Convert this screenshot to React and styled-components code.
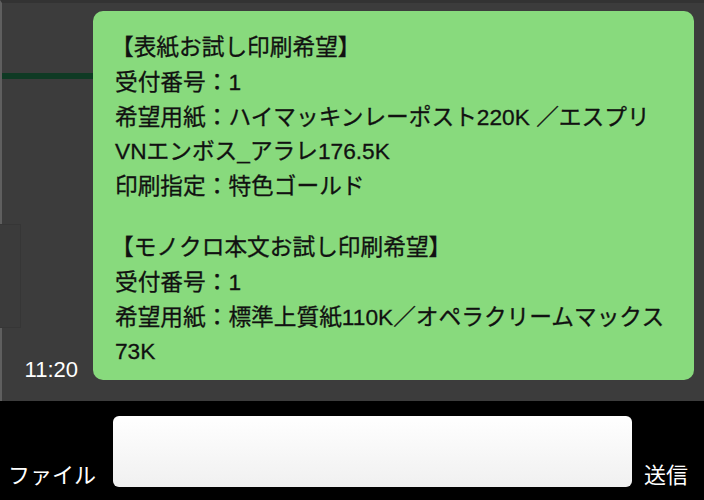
import React from 'react';
import styled, {createGlobalStyle} from "styled-components";

const GlobalStyle = createGlobalStyle`
  html, body {
    margin: 0;
    padding: 0;
    background: #3c3c3c;
  }
  body {
    font-family: "Liberation Sans", "Noto Sans CJK JP", sans-serif;
  }
`

const Screen = styled.div`
  width: 704px;
  height: 500px;
  display: flex;
  flex-direction: column;
  overflow: hidden;
`

const ChatArea = styled.div`
  height: 401px;
  box-sizing: border-box;
  display: flex;
  background: #3c3c3c;
  border-top: 3px solid #333333;
  border-left: 2px solid #5f5f5f;
  padding-bottom: 21px;
`

const LeftPane = styled.div`
  width: 91px;
  display: flex;
  flex-direction: column;
`

const GreenRule = styled.div`
  height: 6px;
  margin-top: 70px;
  background: #0f3a24;
`

const FaintCard = styled.div`
  width: 20px;
  height: 102px;
  margin-top: 145px;
  margin-left: -2px;
  border: 1px solid #363636;
  border-left: none;
  background: #3b3b3b;
`

const Time = styled.div`
  margin-top: auto;
  align-self: flex-end;
  margin-right: 15px;
  color: #fff;
  font-family: "Liberation Sans", sans-serif;
  font-size: 22px;
  line-height: 21px;
`

const Bubble = styled.div`
  width: 601px;
  margin-top: 8px;
  box-sizing: border-box;
  padding: 19px 20px 16px 22px;
  background: #88da7d;
  border-radius: 10px;
  color: #111;
  font-size: 22.7px;
  line-height: 34px;
  -webkit-text-stroke: 0.3px #111;
  display: flex;
  flex-direction: column;
  gap: 27px;
`

const Block = styled.div`
  display: flex;
  flex-direction: column;
`

const Line = styled.div`
  white-space: nowrap;
  margin-left: ${p => p.$heading ? '-4px' : '0'};
`

// centred full-width colon, as in the Japanese font of the original
const Sep = styled.span`
  font-family: "Noto Sans CJK TC", sans-serif;
`

const InputBar = styled.div`
  flex: 1;
  background: #000;
  display: flex;
  align-items: flex-end;
  padding: 0 14px 13px 8px;
`

const BarLabel = styled.div`
  color: #fff;
  font-family: "Noto Sans CJK JP", sans-serif;
  font-size: 22px;
  line-height: 22px;
  margin-bottom: 3px;
`

const TextBox = styled.div`
  width: 519px;
  height: 71px;
  margin: 0 12px 0 17px;
  border-radius: 6px;
  background: linear-gradient(#ffffff, #f0f0f0);
`

const blocks = [
  [
    "\u3010表紙お試し印刷希望\u3011",
    "受付番号：1",
    "希望用紙：ハイマッキンレーポスト220K ／エスプリ",
    "VNエンボス_アラレ176.5K",
    "印刷指定：特色ゴールド",
  ],
  [
    "\u3010モノクロ本文お試し印刷希望\u3011",
    "受付番号：1",
    "希望用紙：標準上質紙110K／オペラクリームマックス",
    "73K",
  ],
];

function renderLine(text){
    const i = text.indexOf("：");
    if (i < 0) return text;
    return <>{text.slice(0, i)}<Sep>：</Sep>{text.slice(i + 1)}</>;
}

function App(){
    return (
        <Screen lang="ja">
            <GlobalStyle />
            <ChatArea>
                <LeftPane>
                    <GreenRule />
                    <FaintCard />
                    <Time>11:20</Time>
                </LeftPane>
                <Bubble>
                    {blocks.map((lines, i) => (
                        <Block key={i}>
                            {lines.map((l, j) => <Line key={j} $heading={j === 0}>{renderLine(l)}</Line>)}
                        </Block>
                    ))}
                </Bubble>
            </ChatArea>
            <InputBar>
                <BarLabel>ファイル</BarLabel>
                <TextBox />
                <BarLabel>送信</BarLabel>
            </InputBar>
        </Screen>
    );
}

export default App;
